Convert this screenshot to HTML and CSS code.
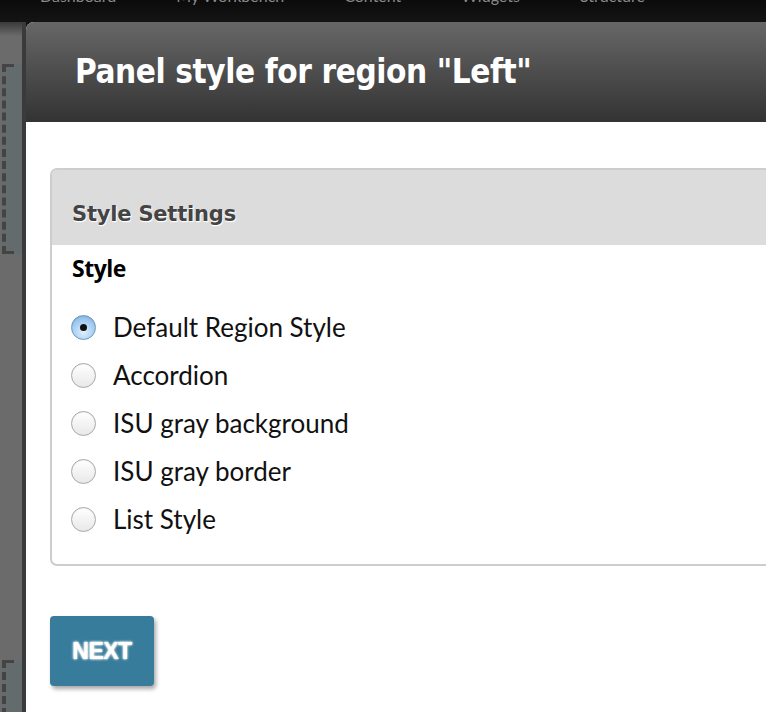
FILE: index.html
```html
<!DOCTYPE html>
<html>
<head>
<meta charset="utf-8">
<link rel="stylesheet" href="styles.css">
</head>
<body>
<div class="page">
  <div class="topbar">
    <div class="topnav">
      <span>Dashboard</span><span>My Workbench</span><span>Content</span><span>Widgets</span><span>Structure</span>
    </div>
  </div>
  <div class="main">
    <div class="sidebar">
      <div class="dashbox box1"></div>
      <div class="dashbox box2"></div>
    </div>
    <div class="modal">
      <div class="modal-header">
        <h1 class="modal-title">Panel style for region "Left"</h1>
      </div>
      <div class="modal-body">
        <div class="fieldset">
          <div class="legend">Style Settings</div>
          <div class="fieldset-content">
            <div class="field-label">Style</div>
            <div class="options">
              <label class="option"><span class="radio checked"></span>Default Region Style</label>
              <label class="option"><span class="radio"></span>Accordion</label>
              <label class="option"><span class="radio"></span>ISU gray background</label>
              <label class="option"><span class="radio"></span>ISU gray border</label>
              <label class="option"><span class="radio"></span>List Style</label>
            </div>
          </div>
        </div>
        <button class="btn-next">NEXT</button>
      </div>
    </div>
  </div>
</div>
</body>
</html>
```

FILE: styles.css
```css
html, body {
  margin: 0;
  padding: 0;
  width: 766px;
  height: 712px;
  overflow: hidden;
  background: #111;
}
.page {
  display: flex;
  flex-direction: column;
  height: 712px;
}
.topbar {
  height: 22px;
  flex: none;
  overflow: hidden;
  background: linear-gradient(#0b0b0b, #141414);
}
.topnav {
  margin-top: -13px;
  padding-left: 40px;
  display: flex;
  gap: 60px;
  font-family: "Lato", sans-serif;
  font-size: 16px;
  line-height: 18px;
  color: #8a8a8a;
  white-space: nowrap;
}
.main {
  display: flex;
  flex: 1;
  min-height: 0;
}
.sidebar {
  width: 20px;
  flex: none;
  background: linear-gradient(#3a3a3a 0, #6b6b6b 14px, #6b6b6b 100%);
  border-right: 4px solid #3a3a3a;
  display: flex;
  flex-direction: column;
  padding-left: 2px;
}
.dashbox {
  flex: none;
  width: 20px;
  background: #636b6d;
  border-left: 4px dashed #444;
  border-top: 3px solid transparent;
  border-bottom: 3px solid transparent;
  box-sizing: border-box;
  position: relative;
}
.box1 {
  margin-top: 42px;
  height: 190px;
}
.box2 {
  margin-top: 406px;
  height: 80px;
  border-bottom: none;
}
.dashbox::before {
  content: "";
  position: absolute;
  left: -4px;
  top: -3px;
  width: 12px;
  height: 3px;
  background: #444;
}
.box1::after {
  content: "";
  position: absolute;
  left: -4px;
  bottom: -3px;
  width: 12px;
  height: 3px;
  background: #444;
}
.modal {
  width: 800px;
  flex: none;
  background: #fff;
  border-top-left-radius: 8px;
  overflow: hidden;
}
.modal-header {
  height: 100px;
  background: linear-gradient(#676767, #333333);
  display: flex;
  align-items: center;
  padding-left: 49px;
}
.modal-title {
  margin: 0;
  font-family: "DejaVu Sans Condensed", "DejaVu Sans", sans-serif;
  font-stretch: condensed;
  font-weight: bold;
  font-size: 33px;
  color: #fff;
  letter-spacing: -0.4px;
  line-height: 40px;
}
.modal-body {
  padding: 46px 0 0 24px;
}
.fieldset {
  width: 760px;
  border: 2px solid #cdcdcd;
  border-radius: 7px;
  overflow: hidden;
}
.legend {
  height: 75px;
  box-sizing: border-box;
  background: #dcdcdc;
  padding: 31px 0 0 20px;
  font-family: "DejaVu Sans", sans-serif;
  font-weight: bold;
  font-size: 21px;
  line-height: 26px;
  color: #444;
  letter-spacing: -0.2px;
  text-shadow: 0 1px 1px #fff, 1px 1px 1px #fff;
}
.fieldset-content {
  padding: 8px 0 21px 20px;
}
.field-label {
  font-family: "Open Sans", sans-serif;
  font-weight: bold;
  font-size: 23px;
  line-height: 30px;
  color: #000;
  letter-spacing: -0.5px;
}
.options {
  margin-top: 20px;
  display: flex;
  flex-direction: column;
}
.option {
  display: flex;
  align-items: center;
  height: 48px;
  font-family: "Lato", sans-serif;
  font-size: 26px;
  color: #111;
}
.radio {
  width: 25px;
  height: 25px;
  box-sizing: border-box;
  border-radius: 50%;
  border: 1px solid #a8a8a8;
  background: linear-gradient(#ffffff, #e8e8e8);
  margin-left: -1px;
  margin-right: 17px;
  flex: none;
  display: flex;
  align-items: center;
  justify-content: center;
  box-shadow: inset 0 1px 1px rgba(0,0,0,0.05);
}
.radio.checked {
  border-color: #6f95bd;
  background: radial-gradient(circle at 50% 70%, #e0f0ff 0, #a4cdf2 55%, #7aaee0 100%);
}
.radio.checked::after {
  content: "";
  width: 7px;
  height: 7px;
  border-radius: 50%;
  background: #111;
}
.btn-next {
  margin-top: 50px;
  width: 104px;
  height: 70px;
  border: none;
  border-radius: 4px;
  background: #387c9b;
  box-shadow: 2px 3px 4px rgba(0,0,0,0.35);
  color: #fff;
  font-family: "Liberation Sans", Arial, sans-serif;
  font-weight: bold;
  font-size: 23px;
  letter-spacing: -0.5px;
  text-shadow: 0 0 3px #fff, 0 0 2px #fff;
  padding: 0;
  display: block;
}
```
